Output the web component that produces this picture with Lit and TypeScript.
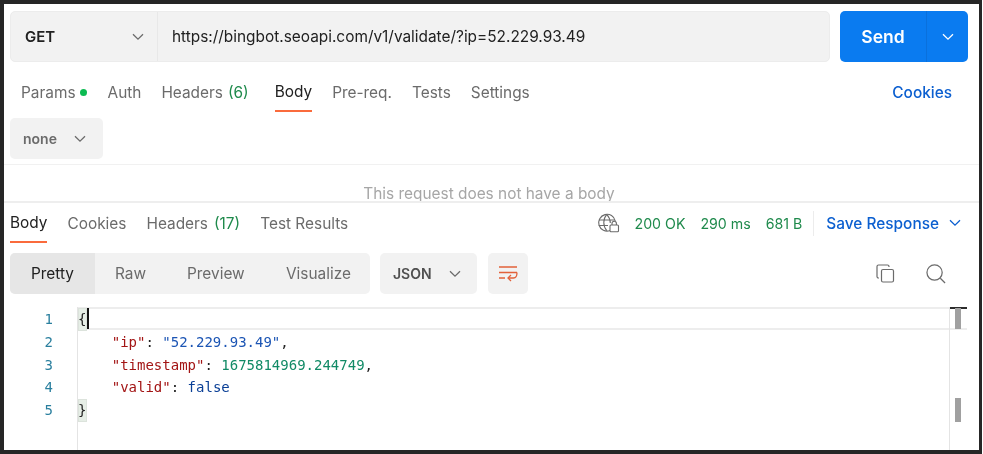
import { LitElement, html, css } from "lit";
import { customElement } from "lit/decorators.js";

const chevron = () => html`<svg class="chev" viewBox="0 0 12 8" width="12" height="8" fill="none" stroke="currentColor" stroke-width="1.3"><path d="M1 1.2 6 6.2 11 1.2"/></svg>`;

@customElement("app-root")
export class AppRoot extends LitElement {
  static styles = css`
    :host { display: block; width: 983px; height: 454px; background: #fff; font-family: Inter, "Liberation Sans", sans-serif; overflow: hidden; }
    * { box-sizing: border-box; }
    .frame { width: 982px; height: 454px; border: solid #262626; border-width: 4px 3px 4px 4px; background: #fff; position: relative; overflow: hidden; display: flex; flex-direction: column; filter: blur(0.3px); }
    .frame > * { flex: none; }
    .urlbar { display: flex; margin: 7px 11px 0 6px; height: 51px; gap: 10px; }
    .urlbox { flex: 1; display: flex; background: #f2f2f2; border: 1px solid #ececec; border-radius: 5px; }
    .method { width: 147px; display: flex; align-items: center; justify-content: space-between; padding: 0 13px 0 14px; border-right: 1px solid #e8e8e8; font-weight: 600; font-size: 15px; color: #212121; }
    .chev { color: #6b6b6b; flex: none; }
    .url { padding-left: 14px; display: flex; align-items: center; font-size: 15.4px; color: #212121; }
    .send { width: 128px; display: flex; background: #0a7bf0; border-radius: 5px; color: #fff; font-weight: 600; font-size: 17.5px; }
    .send-main { width: 87px; display: flex; align-items: center; justify-content: center; border-right: 1px solid #0a70dc; }
    .send-arrow { flex: 1; display: flex; align-items: center; justify-content: center; }
    .send-arrow .chev { color: #fff; }
    .tabs { display: flex; align-items: stretch; font-size: 15.4px; color: #6b6b6b; }
    .req-tabs { height: 50px; padding: 0 27px 0 17px; gap: 20px; }
    .tab { display: flex; align-items: center; height: 100%; position: relative; padding-top: 10px; white-space: nowrap; }
    .tab.sel { color: #212121; border-bottom: 2px solid #fa6b3c; }
    .tab.wide { margin-right: 6px; }
    .green { color: #1f8a4c; margin-left: 5px; }
    .res-tabs .green { margin-left: 6px; }
    .dot { width: 7px; height: 7px; background: #0cbb52; border-radius: 50%; margin-left: 4px; margin-right: 1px; }
    .cookies { margin-left: auto; color: #0b5fd0; font-weight: 500; font-size: 15.4px; display: flex; align-items: center; padding-top: 10px; }
    .bodytype { margin: 6px 0 0 6px; width: 93px; height: 41px; background: #f2f2f2; border-radius: 5px; display: flex; align-items: center; justify-content: space-between; padding: 0 17px 0 13px; font-weight: 600; font-size: 14px; color: #6b6b6b; }
    .empty { margin-top: 5px; height: 39px; border-top: 1px solid #f1f1f1; border-bottom: 2px solid #eeeeee; font-size: 15.4px; color: #a6a6a6; text-align: center; overflow: hidden; padding: 20px 5px 0 0; line-height: 18px; white-space: nowrap; }
    .res-head { height: 40px; display: flex; align-items: stretch; padding: 0 18px 0 6px; }
    .res-tabs { gap: 20px; }
    .res-tabs .tab { padding-top: 0; }
    .meta { margin-left: auto; display: flex; align-items: center; font-size: 14.2px; color: #1f8a4c; }
    .meta .globe { margin-right: 14px; color: #6b6b6b; }
    .meta span + span { margin-left: 15px; }
    .sep { width: 1px; height: 25px; background: #ececec; margin: 0 12px 0 11px; }
    .save { color: #0b5fd0; font-weight: 500; font-size: 15.4px; display: flex; align-items: center; gap: 10px; }
    .save .chev { color: #0b5fd0; }
    .toolbar { margin-top: 10px; height: 41px; display: flex; padding: 0 33px 0 6px; align-items: stretch; font-size: 15.4px; color: #6b6b6b; }
    .seg { width: 360px; background: #f2f2f2; border-radius: 5px; display: flex; overflow: hidden; }
    .seg div { display: flex; align-items: center; justify-content: center; }
    .seg .on { width: 85px; background: #e6e6e6; color: #212121; }
    .seg .raw { width: 71px; }
    .seg .prev { width: 100px; justify-content: flex-start; padding-left: 21px; }
    .seg .vis { width: 104px; justify-content: flex-start; padding-left: 20px; }
    .json { margin-left: 10px; width: 97px; background: #f2f2f2; border-radius: 5px; display: flex; align-items: center; justify-content: space-between; padding: 0 16px 0 13px; font-weight: 600; font-size: 14px; color: #505050; }
    .wrapbtn { margin-left: 11px; width: 40px; background: #f2f2f2; border-radius: 5px; display: flex; align-items: center; justify-content: center; }
    .tools { margin-left: auto; display: flex; align-items: center; gap: 31px; color: #6b6b6b; }
    .frame > .editor { position: relative; margin-top: 13px; flex: 1; display: grid; grid-template-columns: 73px 1fr; font-family: "DejaVu Sans Mono", "Liberation Mono", monospace; font-size: 14px; }
    .nums { text-align: right; padding: 1px 24px 0 0; color: #2a7f9e; line-height: 22.8px; }
    .code { padding-top: 1px; color: #212121; position: relative; border-left: 1px solid #e4e4e4; }
    .line { height: 22.8px; line-height: 22.8px; white-space: pre; position: relative; }
    .activeline { position: absolute; left: 0; right: 12px; top: 0; height: 23px; border: solid #ededed; border-width: 2px 0; }
    .brace { background: #e6eee6; box-shadow: inset 0 0 0 1px #dce3dc; display: inline-block; width: 9px; height: 22.8px; }
    .caret { position: absolute; left: 9px; top: 1px; width: 2px; height: 21px; background: #111; }
    .k { color: #a31515; }
    .s { color: #1c55b4; }
    .n { color: #118a66; }
    .b { color: #0a3f96; }
    .ruler { position: absolute; right: 16px; top: 0; bottom: 0; width: 14px; border-left: 1px solid #e4e4e4; }
    .mark { position: absolute; left: 5px; width: 6px; background: #a0a0a0; }
    .mark.top { top: 1px; height: 21px; }
    .mark.low { top: 91px; height: 24px; }
    .rulercap { position: absolute; left: 0; width: 17px; top: 0; height: 2px; background: #2c2c2c; }
  `;

  render() {
    return html`<div class="frame">
      <div class="urlbar">
        <div class="urlbox">
          <div class="method">GET ${chevron()}</div>
          <div class="url">https://bingbot.seoapi.com/v1/validate/?ip=52.229.93.49</div>
        </div>
        <div class="send">
          <div class="send-main">Send</div>
          <div class="send-arrow">${chevron()}</div>
        </div>
      </div>
      <div class="tabs req-tabs">
        <div class="tab">Params<i class="dot"></i></div>
        <div class="tab">Auth</div>
        <div class="tab wide">Headers<span class="green">(6)</span></div>
        <div class="tab sel">Body</div>
        <div class="tab">Pre-req.</div>
        <div class="tab">Tests</div>
        <div class="tab">Settings</div>
        <div class="cookies">Cookies</div>
      </div>
      <div class="bodytype">none ${chevron()}</div>
      <div class="empty">This request does not have a body</div>
      <div class="res-head">
        <div class="tabs res-tabs">
          <div class="tab sel">Body</div>
          <div class="tab">Cookies</div>
          <div class="tab">Headers<span class="green">(17)</span></div>
          <div class="tab">Test Results</div>
        </div>
        <div class="meta">
          <svg class="globe" width="23" height="20" viewBox="0 0 23 20" fill="none" stroke="currentColor" stroke-width="1.1">
            <path d="M13 17.6A8.4 8.4 0 1 1 18.3 8"/>
            <path d="M1.8 7h16M1.8 12.5H11M9.8 1.4C5.8 6 5.8 13 9.8 17.6M9.8 1.4c2.6 3 3.5 5.8 3.5 8.6"/>
            <rect x="13" y="12" width="8.5" height="6.8" rx="1"/>
            <path d="M15 12v-1.5a2.2 2.2 0 0 1 4.4 0V12"/>
          </svg>
          <span>200 OK</span><span>290 ms</span><span>681 B</span>
          <div class="sep"></div>
          <div class="save">Save Response ${chevron()}</div>
        </div>
      </div>
      <div class="toolbar">
        <div class="seg">
          <div class="on">Pretty</div><div class="raw">Raw</div><div class="prev">Preview</div><div class="vis">Visualize</div>
        </div>
        <div class="json">JSON ${chevron()}</div>
        <div class="wrapbtn">
          <svg width="20" height="17" viewBox="0 0 20 17" fill="none" stroke="#e2613a" stroke-width="1.3">
            <path d="M1 2h18M1 7.5h18M1 13h6"/>
            <path d="M19 7.5c0 3-1 5.5-3.5 5.5H10"/>
            <path d="M13 10l-3 3 3 3"/>
          </svg>
        </div>
        <div class="tools">
          <svg width="19" height="19" viewBox="0 0 19 19" fill="none" stroke="currentColor" stroke-width="1.2">
            <rect x="5.5" y="5.5" width="12" height="12.5" rx="1.5"/>
            <path d="M3 14H2.5A1.5 1.5 0 0 1 1 12.5V2.5A1.5 1.5 0 0 1 2.5 1H11.5A1.5 1.5 0 0 1 13 2.5V3"/>
          </svg>
          <svg width="20" height="20" viewBox="0 0 21 21" fill="none" stroke="currentColor" stroke-width="1.3">
            <circle cx="9" cy="9" r="8"/><path d="M15 15l5 5"/>
          </svg>
        </div>
      </div>
      <div class="editor">
        <div class="nums">1<br />2<br />3<br />4<br />5</div>
        <div class="code">
          <div class="activeline"></div>
          <div class="caret"></div>
          <div class="line"><span class="brace">{</span></div>
          <div class="line">    <span class="k">"ip"</span>: <span class="s">"52.229.93.49"</span>,</div>
          <div class="line">    <span class="k">"timestamp"</span>: <span class="n">1675814969.244749</span>,</div>
          <div class="line">    <span class="k">"valid"</span>: <span class="b">false</span></div>
          <div class="line"><span class="brace">}</span></div>
        </div>
        <div class="ruler">
          <div class="rulercap"></div>
          <div class="mark top"></div>
          <div class="mark low"></div>
        </div>
      </div>
    </div>`;
  }
}
